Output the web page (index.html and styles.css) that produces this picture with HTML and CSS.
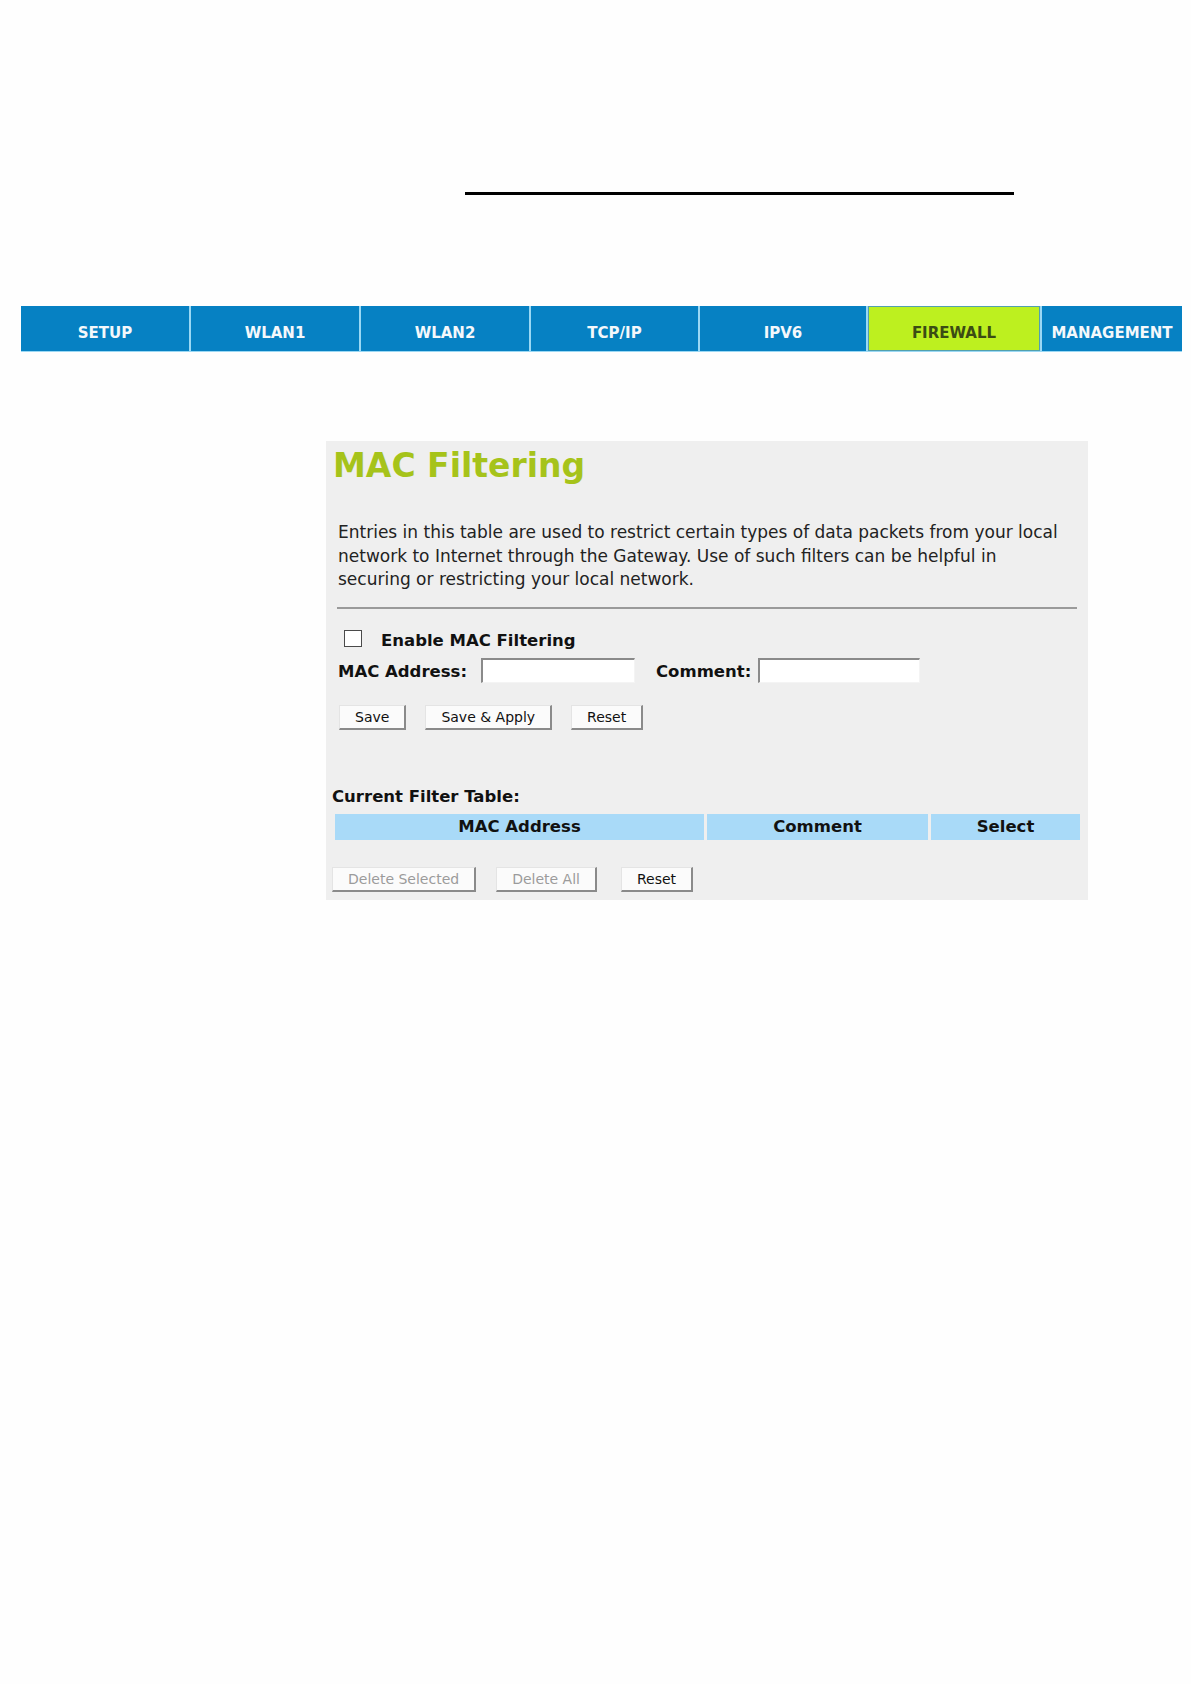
FILE: index.html
```html
<!DOCTYPE html>
<html lang="en">
<head>
    <meta charset="UTF-8">
    <meta name="viewport" content="width=device-width, initial-scale=1.0">
    <title>MAC Filtering</title>
    <link rel="stylesheet" href="styles.css">
</head>
<body>
    <div class="top-rule"></div>

    <!-- Main menu -->
    <div class="menu">
        <div class="menu-item">SETUP</div>
        <div class="menu-item">WLAN1</div>
        <div class="menu-item">WLAN2</div>
        <div class="menu-item">TCP/IP</div>
        <div class="menu-item">IPV6</div>
        <div class="menu-item active">FIREWALL</div>
        <div class="menu-item">MANAGEMENT</div>
    </div>

    <!-- MAC filter panel -->
    <div class="panel">
        <h2>MAC Filtering</h2>
        <p class="intro">Entries in this table are used to restrict certain types of data packets from your local<br>
            network to Internet through the Gateway. Use of such filters can be helpful in<br>
            securing or restricting your local network.</p>
        <hr>

        <form>
            <div class="check-row">
                <input type="checkbox" id="enableMac">
                <label for="enableMac">Enable MAC Filtering</label>
            </div>
            <div class="field-row">
                <label for="macAddr">MAC Address:</label>
                <input type="text" id="macAddr" class="mac-input">
                <label for="macComment" class="comment-label">Comment:</label>
                <input type="text" id="macComment" class="comment-input">
            </div>
            <div class="button-row">
                <button type="button">Save</button>
                <button type="button">Save &amp; Apply</button>
                <button type="reset">Reset</button>
            </div>
        </form>

        <div class="table-title">Current Filter Table:</div>
        <table class="filter-table">
            <tr>
                <th class="col-mac">MAC Address</th>
                <th class="col-comment">Comment</th>
                <th class="col-select">Select</th>
            </tr>
        </table>
        <div class="button-row bottom-row">
            <button type="button" disabled>Delete Selected</button>
            <button type="button" disabled>Delete All</button>
            <button type="button" class="last">Reset</button>
        </div>
    </div>
</body>
</html>
```

FILE: styles.css
```css
/* Global styles */
body {
    margin: 0;
    background-color: #fefefe;
    font-family: Verdana, "DejaVu Sans", sans-serif;
    color: #1e1e1e;
}

.top-rule {
    width: 549px;
    height: 3px;
    background-color: #000;
    margin: 192px 0 0 465px;
}

/* Menu bar */
.menu {
    display: grid;
    grid-template-columns: 168px 168px 168px 167px 166px 172px 140px;
    column-gap: 2px;
    width: 1161px;
    margin: 111px 0 0 21px;
    background-color: #9ad8f4;
    border-bottom: 1px solid #9ad8f4;
}

.menu-item {
    box-sizing: border-box;
    height: 45px;
    padding-top: 9px;
    line-height: 36px;
    text-align: center;
    background-color: #0681c3;
    color: #f4f8fb;
    font-size: 15px;
    font-weight: bold;
}

.menu-item.active {
    background-color: #bdf01f;
    color: #3b4c14;
    box-shadow: inset 0 0 0 1px #52a0ae;
}

/* Panel */
.panel {
    width: 762px;
    margin: 89px 0 0 326px;
    padding-bottom: 8px;
    background-color: #efefef;
}

.panel h2 {
    margin: 0;
    padding: 5px 0 0 7px;
    font-size: 33px;
    line-height: 40px;
    color: #a6c31a;
}

.intro {
    margin: 35px 0 0 12px;
    font-size: 17px;
    line-height: 23.5px;
    color: #222;
}

.panel hr {
    height: 0;
    margin: 15px 11px 0;
    border: 0;
    border-top: 2px solid #9a9a9a;
}

form {
    margin: 0;
}

.check-row {
    display: flex;
    align-items: flex-start;
    margin: 21px 0 0 18px;
    font-size: 16.5px;
    font-weight: bold;
    line-height: 22px;
    color: #111;
}

.check-row input {
    appearance: none;
    box-sizing: border-box;
    width: 18px;
    height: 17px;
    margin: 0 19px 0 0;
    border: 1.5px solid #4a4a4a;
    background-color: #fff;
}

.field-row {
    display: flex;
    align-items: center;
    margin: 6px 0 0 12px;
    font-size: 16.5px;
    font-weight: bold;
    line-height: 22px;
    color: #111;
}

.field-row label {
    padding-top: 3px;
}

.field-row input {
    box-sizing: border-box;
    height: 25px;
    padding: 0 3px;
    background-color: #fff;
    border: 1px solid #f4f4f4;
    border-top: 2px solid #8a8a8a;
    border-left: 2px solid #8a8a8a;
}

.mac-input {
    width: 154px;
    margin: 0 0 0 14px;
}

.comment-input {
    width: 162px;
    margin: 0 0 0 7px;
}

.comment-label {
    margin-left: 21px;
}

/* Buttons */
.button-row {
    display: flex;
    gap: 19px;
    margin: 22px 0 0 13px;
}

button {
    box-sizing: border-box;
    height: 25px;
    padding: 0 15px;
    font-family: inherit;
    font-size: 14px;
    color: #111;
    background-color: #fbfbfb;
    border: 1px solid #e4e4e4;
    border-right: 2px solid #8a8a8a;
    border-bottom: 2px solid #8a8a8a;
    border-radius: 0;
}

button:disabled {
    color: #9b9b9b;
}

/* Filter table */
.table-title {
    margin: 56px 0 0 6px;
    font-size: 16.5px;
    font-weight: bold;
    line-height: 22px;
    color: #111;
}

.filter-table {
    margin: 3px 0 0 6px;
    border-spacing: 3px;
}

.filter-table th {
    height: 26px;
    padding: 0;
    background-color: #a9daf8;
    font-size: 16.5px;
    color: #111;
}

.col-mac {
    width: 369px;
}

.col-comment {
    width: 221px;
}

.col-select {
    width: 149px;
}

.bottom-row {
    gap: 20px;
    margin: 24px 0 0 6px;
}

.bottom-row .last {
    margin-left: 4px;
}
```
